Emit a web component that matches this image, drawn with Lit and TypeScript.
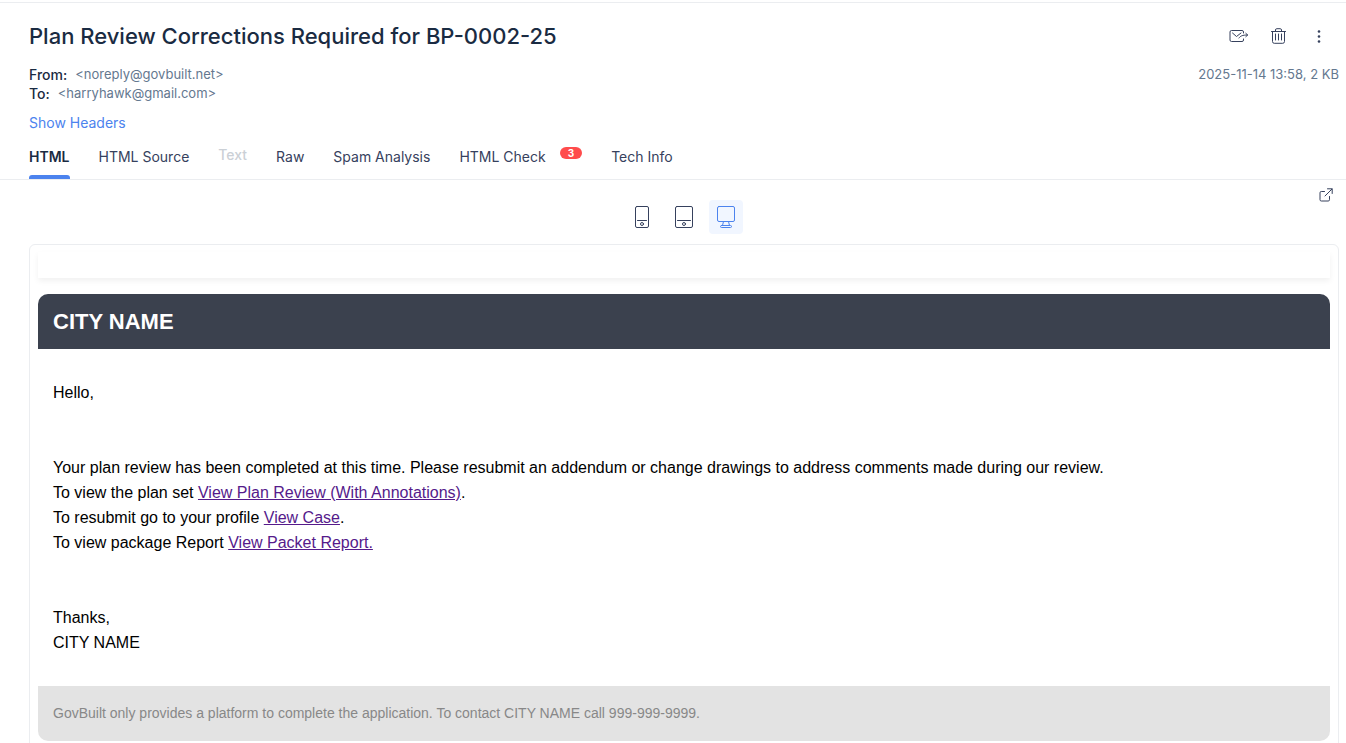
import { LitElement, html, css, svg, nothing } from "lit";
import { customElement, state } from "lit/decorators.js";

interface Tab {
  label: string;
  disabled?: boolean;
  count?: number;
}

const TABS: Tab[] = [
  { label: "HTML" },
  { label: "HTML Source" },
  { label: "Text", disabled: true },
  { label: "Raw" },
  { label: "Spam Analysis" },
  { label: "HTML Check", count: 3 },
  { label: "Tech Info" },
];

const forwardIcon = svg`<svg class="icon" width="20" height="14" viewBox="0 0 20 14" aria-hidden="true">
  <path d="M14.500 4V3A1.500 1.500 0 0 0 13 1.500H2.500A1.500 1.500 0 0 0 1 3V11A1.500 1.500 0 0 0 2.500 12.500H13A1.500 1.500 0 0 0 14.500 11V10"/>
  <path d="M3.500 4L7.500 7.500L12 4M10 9C11.500 7 13 6 18.500 6M16.800 4.300L18.700 6L16.800 7.700"/>
</svg>`;

const trashIcon = svg`<svg class="icon" width="16" height="16" viewBox="0 0 16 16" aria-hidden="true">
  <path d="M.5 3.500H14.500M4.500 3.500V2A1.300 1.300 0 0 1 5.800 .7H9.200A1.300 1.300 0 0 1 10.500 2V3.500M1.500 3.500V13.500A1.800 1.800 0 0 0 3.300 15.300H11.700A1.800 1.800 0 0 0 13.500 13.500V3.500M4.500 6V12M7.500 6V12M10.500 6V12"/>
</svg>`;

const dotsIcon = svg`<svg class="solid" width="16" height="16" viewBox="0 0 16 16" aria-hidden="true">
  <circle cx="8" cy="3.500" r="1.300"/><circle cx="8" cy="8.500" r="1.300"/><circle cx="8" cy="13.500" r="1.300"/>
</svg>`;

const openIcon = svg`<svg class="icon" width="14" height="14" viewBox="0 0 14 14" aria-hidden="true">
  <path d="M5.500 3.500H2.300A1.300 1.300 0 0 0 1 4.800V11.700A1.300 1.300 0 0 0 2.300 13H9.200A1.300 1.300 0 0 0 10.500 11.700V8.500M6 8L13 1M8.500 .8H13.200V5.500"/>
</svg>`;

const phoneIcon = svg`<svg class="icon" width="24" height="24" viewBox="0 0 24 24" aria-hidden="true">
  <rect x="5.500" y="1.500" width="13" height="21" rx="1.500"/><path d="M7.500 15.500H16.500"/><circle cx="12" cy="19" r="1.500"/>
</svg>`;

const tabletIcon = svg`<svg class="icon" width="24" height="24" viewBox="0 0 24 24" aria-hidden="true">
  <rect x="3.500" y="1.500" width="17" height="21" rx="1.500"/><path d="M5.500 15.500H18.500"/><circle cx="12" cy="19" r="1.500"/>
</svg>`;

const desktopIcon = svg`<svg class="icon" width="24" height="24" viewBox="0 0 24 24" aria-hidden="true">
  <rect x="3.500" y="1.500" width="17" height="15" rx="1.500"/><path d="M9.500 16.500L8.500 20.500M14.500 16.500L15.500 20.500"/><rect x="6.500" y="20.500" width="11" height="2" rx="1"/>
</svg>`;

const DEVICES = [
  { name: "Mobile", icon: phoneIcon },
  { name: "Tablet", icon: tabletIcon },
  { name: "Desktop", icon: desktopIcon },
];

@customElement("mail-body")
class MailBody extends LitElement {
  static styles = css`
    :host {
      display: block;
      font: 16px/25px "Liberation Sans", Arial, sans-serif;
      color: #000;
    }
    .strip {
      height: 26px;
      margin-bottom: 16px;
      box-shadow: 0 3px 6px rgba(0, 0, 0, 0.06);
    }
    .banner {
      margin: 0;
      padding: 15px;
      border-radius: 10px 10px 0 0;
      background: #3b414e;
      color: #fff;
      font-size: 22px;
      line-height: 25px;
      font-weight: 700;
    }
    .content {
      display: grid;
      gap: 50px;
      padding: 31px 15px;
    }
    .content p {
      margin: 0;
    }
    .content a {
      color: #551a8b;
    }
    .note {
      padding: 15px;
      border-radius: 0 0 10px 10px;
      background: #e3e3e3;
      color: #888;
      font-size: 14px;
    }
  `;

  render() {
    return html`
      <div class="strip"></div>
      <h2 class="banner">CITY NAME</h2>
      <div class="content">
        <p>Hello,</p>
        <p>
          Your plan review has been completed at this time. Please resubmit an addendum or change drawings to address comments made during our review.<br />
          To view the plan set <a href="#plan">View Plan Review (With Annotations)</a>.<br />
          To resubmit go to your profile <a href="#case">View Case</a>.<br />
          To view package Report <a href="#report">View Packet Report.</a>
        </p>
        <p>Thanks,<br />CITY NAME</p>
      </div>
      <div class="note">GovBuilt only provides a platform to complete the application. To contact CITY NAME call 999-999-9999.</div>
    `;
  }
}

@customElement("app-root")
class AppRoot extends LitElement {
  static styles = css`
    :host {
      display: block;
      height: 100vh;
      overflow: hidden;
      background: #fff;
      color: #1a2b42;
      font: 14px/20px Inter, sans-serif;
    }
    button {
      display: flex;
      align-items: center;
      justify-content: center;
      margin: 0;
      padding: 0;
      border: 0;
      background: none;
      color: #36415d;
      font: inherit;
      cursor: pointer;
    }
    a {
      color: #4c83ee;
      text-decoration: none;
    }
    .icon {
      fill: none;
      stroke: currentColor;
      stroke-linecap: round;
      stroke-linejoin: round;
    }
    .solid {
      fill: currentColor;
    }
    .top {
      margin-top: 2px;
      padding: 17px 7px 0 29px;
      border-top: 1px solid #ebedf0;
    }
    .row {
      display: flex;
      justify-content: space-between;
    }
    .title {
      margin: 0;
      font-size: 22px;
      line-height: 32px;
      font-weight: 500;
    }
    .actions {
      display: flex;
      gap: 8px;
      padding-right: 4px;
    }
    .actions button {
      width: 32px;
      height: 32px;
    }
    .meta {
      margin-top: 13px;
      line-height: 19px;
      color: #64788f;
      font-size: 13px;
    }
    .people {
      margin: 0;
    }
    .people div {
      display: flex;
      gap: 8px;
    }
    .people dt {
      color: #1a2b42;
      font-size: 14px;
      font-weight: 500;
    }
    .people dd {
      margin: 0;
    }
    .headers {
      display: inline-block;
      margin-top: 10px;
    }
    .tabs {
      display: flex;
      gap: 29px;
      height: 46px;
      padding-left: 29px;
      border-bottom: 1px solid #ebedf0;
    }
    .tab {
      position: relative;
      gap: 14px;
      padding-top: 2px;
    }
    .tab.active {
      color: #1a2b42;
      font-weight: 600;
    }
    .tab.active::after {
      content: "";
      position: absolute;
      inset: auto 0 0;
      height: 4px;
      border-radius: 3px 3px 0 0;
      background: #4c83ee;
    }
    .tab:disabled {
      padding-top: 0;
      padding-bottom: 2px;
      color: #cbd0d6;
      font-weight: 500;
    }
    .count {
      margin-bottom: 8px;
      padding: 0 8px;
      border-radius: 6px;
      background: #ff4c4c;
      color: #fff;
      font-size: 10px;
      line-height: 12px;
      font-weight: 700;
    }
    .view {
      display: grid;
      grid-template-columns: 1fr auto 1fr;
      padding: 2px 7px 10px 29px;
    }
    .devices {
      grid-column: 2;
      display: flex;
      gap: 8px;
      padding-top: 18px;
    }
    .devices button {
      width: 34px;
      height: 34px;
      border-radius: 4px;
    }
    .devices .active {
      background: #f1f6ff;
      color: #4c83ee;
    }
    .open {
      justify-self: end;
      width: 26px;
      height: 26px;
    }
    .frame {
      margin: 0 7px 0 29px;
      padding: 7px 8px 24px;
      border: 1px solid #ebedf0;
      border-radius: 6px;
    }
  `;

  @state() tab = "HTML";
  @state() device = "Desktop";

  render() {
    return html`
      <header class="top">
        <div class="row">
          <h1 class="title">Plan Review Corrections Required for BP-0002-25</h1>
          <div class="actions">
            <button aria-label="Forward">${forwardIcon}</button>
            <button aria-label="Delete">${trashIcon}</button>
            <button aria-label="More">${dotsIcon}</button>
          </div>
        </div>
        <div class="row meta">
          <dl class="people">
            <div><dt>From:</dt><dd>&lt;noreply@govbuilt.net&gt;</dd></div>
            <div><dt>To:</dt><dd>&lt;harryhawk@gmail.com&gt;</dd></div>
          </dl>
          <span>2025-11-14 13:58, 2 KB</span>
        </div>
        <a class="headers" href="#headers">Show Headers</a>
      </header>
      <nav class="tabs">
        ${TABS.map(
          (t) => html`<button
            class="tab ${t.label === this.tab ? "active" : ""}"
            ?disabled=${t.disabled}
            @click=${() => (this.tab = t.label)}
          >${t.label}${t.count ? html`<span class="count">${t.count}</span>` : nothing}</button>`
        )}
      </nav>
      <div class="view">
        <div class="devices">
          ${DEVICES.map(
            (d) => html`<button
              class=${d.name === this.device ? "active" : ""}
              aria-label=${d.name}
              @click=${() => (this.device = d.name)}
            >${d.icon}</button>`
          )}
        </div>
        <button class="open" aria-label="Open in new tab">${openIcon}</button>
      </div>
      <main class="frame"><mail-body></mail-body></main>
    `;
  }
}
